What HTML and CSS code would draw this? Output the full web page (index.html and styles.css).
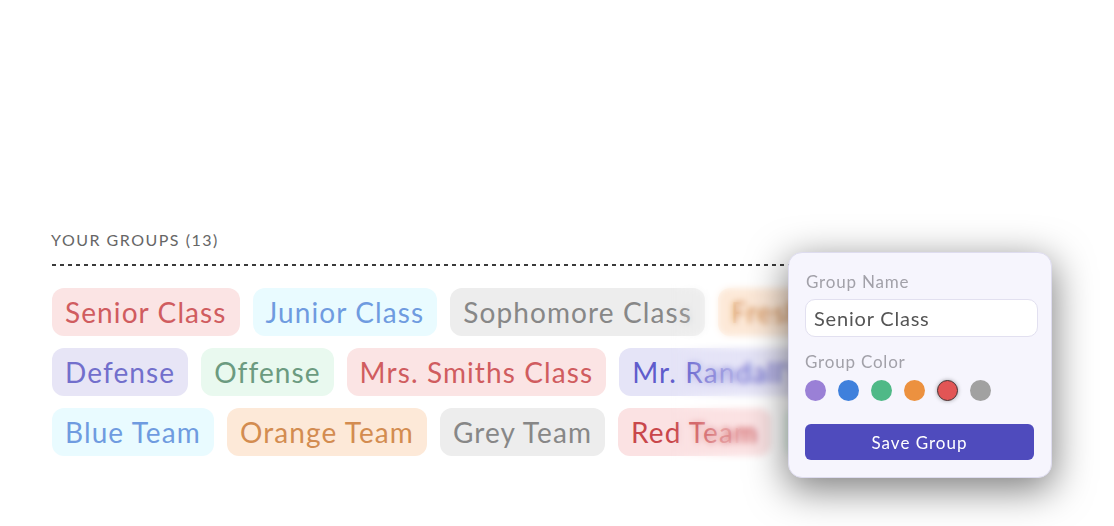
FILE: index.html
```html
<!DOCTYPE html>
<html>
<head>
<meta charset="utf-8">
<link rel="stylesheet" href="styles.css">
</head>
<body>
<section class="groups">
  <h2 class="groups-title">YOUR GROUPS (13)</h2>
  <div class="dash"></div>
  <div class="tags">
    <div class="row">
      <span class="tag red">Senior Class</span>
      <span class="tag cyan">Junior Class</span>
      <span class="tag grey">Sophomore Class</span>
      <span class="tag orange">Freshman Class</span>
    </div>
    <div class="row">
      <span class="tag violet">Defense</span>
      <span class="tag green">Offense</span>
      <span class="tag red">Mrs. Smiths Class</span>
      <span class="tag indigo">Mr. Randall's Class</span>
    </div>
    <div class="row">
      <span class="tag cyan">Blue Team</span>
      <span class="tag orange">Orange Team</span>
      <span class="tag grey">Grey Team</span>
      <span class="tag crimson">Red Team</span>
      <span class="tag green">Green Team</span>
    </div>
  </div>
</section>
<div class="blur-veil"></div>
<div class="popover">
  <label class="field-label">Group Name</label>
  <div class="input">Senior Class</div>
  <label class="field-label second">Group Color</label>
  <div class="swatches">
    <span class="sw s-purple"></span>
    <span class="sw s-blue"></span>
    <span class="sw s-green"></span>
    <span class="sw s-orange"></span>
    <span class="sw s-red selected"></span>
    <span class="sw s-grey"></span>
  </div>
  <button class="save">Save Group</button>
</div>
</body>
</html>
```
FILE: styles.css
```css
html, body {
  margin: 0;
  padding: 0;
  background: #ffffff;
  width: 1114px;
  height: 526px;
  overflow: hidden;
  font-family: "Lato", "Noto Sans", sans-serif;
}
.groups {
  padding: 229px 0 0 51px;
  display: flex;
  flex-direction: column;
}
.groups-title {
  margin: 0;
  font-size: 16px;
  font-weight: 400;
  letter-spacing: 1.5px;
  color: #666666;
  line-height: 22px;
}
.dash {
  margin-top: 13px;
  margin-left: 1px;
  width: 740px;
  height: 2px;
  background: repeating-linear-gradient(90deg, #3a3a3a 0 4px, transparent 4px 8px);
}
.tags {
  margin-top: 22px;
  margin-left: 1px;
  display: flex;
  flex-direction: column;
  gap: 12px;
}
.row {
  display: flex;
  gap: 13px;
  white-space: nowrap;
}
.tag {
  height: 48px;
  line-height: 48px;
  padding: 0 13px;
  border-radius: 12px;
  font-size: 28px;
  letter-spacing: 1.1px;
}
.red { background: #fbe4e4; color: #d05c5f; }
.cyan { background: #e9fbff; color: #6f9be0; }
.grey { background: #ededed; color: #878787; }
.orange { background: #fde9d8; color: #d38c50; }
.violet { background: #e7e5f6; color: #726fcc; }
.green { background: #e9f9ef; color: #6c9b80; }
.indigo { background: #e5e4f7; color: #5f5ccc; }
.crimson { background: #fbe2e3; color: #c9474b; }

.blur-veil {
  position: absolute;
  left: 670px;
  top: 272px;
  width: 130px;
  height: 220px;
  backdrop-filter: blur(3px);
  -webkit-mask-image: linear-gradient(90deg, transparent 0%, #000 55%);
  mask-image: linear-gradient(90deg, transparent 0%, #000 55%);
}
.popover {
  position: absolute;
  left: 788px;
  top: 252px;
  width: 264px;
  height: 226px;
  box-sizing: border-box;
  padding: 19px 14px 0 17px;
  background: #f6f5fd;
  border: 1px solid #dedcef;
  border-radius: 14px;
  box-shadow: 0 10px 38px 2px rgba(0, 0, 0, 0.5);
  display: flex;
  flex-direction: column;
}
.field-label {
  font-size: 17px;
  line-height: 20px;
  color: #a2a1a9;
  letter-spacing: 0.8px;
}
.input {
  margin-top: 7px;
  margin-left: -1px;
  width: 233px;
  height: 38px;
  box-sizing: border-box;
  background: #ffffff;
  border: 1px solid #e2e0f0;
  border-radius: 10px;
  padding: 0 8px;
  line-height: 36px;
  font-size: 20px;
  letter-spacing: 0.8px;
  color: #555555;
}
.field-label.second {
  margin-top: 15px;
  margin-left: -1px;
}
.swatches {
  margin-top: 8px;
  margin-left: -1px;
  display: flex;
  gap: 12px;
}
.sw {
  width: 21px;
  height: 21px;
  border-radius: 50%;
  box-sizing: border-box;
}
.s-purple { background: #9a80d6; }
.s-blue { background: #3f80dc; }
.s-green { background: #4fb987; }
.s-orange { background: #ec913f; }
.s-red { background: #e25555; }
.s-grey { background: #a1a1a1; }
.sw.selected {
  border: 1.5px solid #4a3434;
  box-shadow: 0 0 4px rgba(0, 0, 0, 0.35);
}
.save {
  margin-top: 23px;
  margin-left: -1px;
  width: 229px;
  height: 36px;
  border: none;
  border-radius: 6px;
  background: #4f4bbd;
  color: #ffffff;
  font-family: inherit;
  font-size: 17px;
  letter-spacing: 1px;
  padding: 0;
}
```
